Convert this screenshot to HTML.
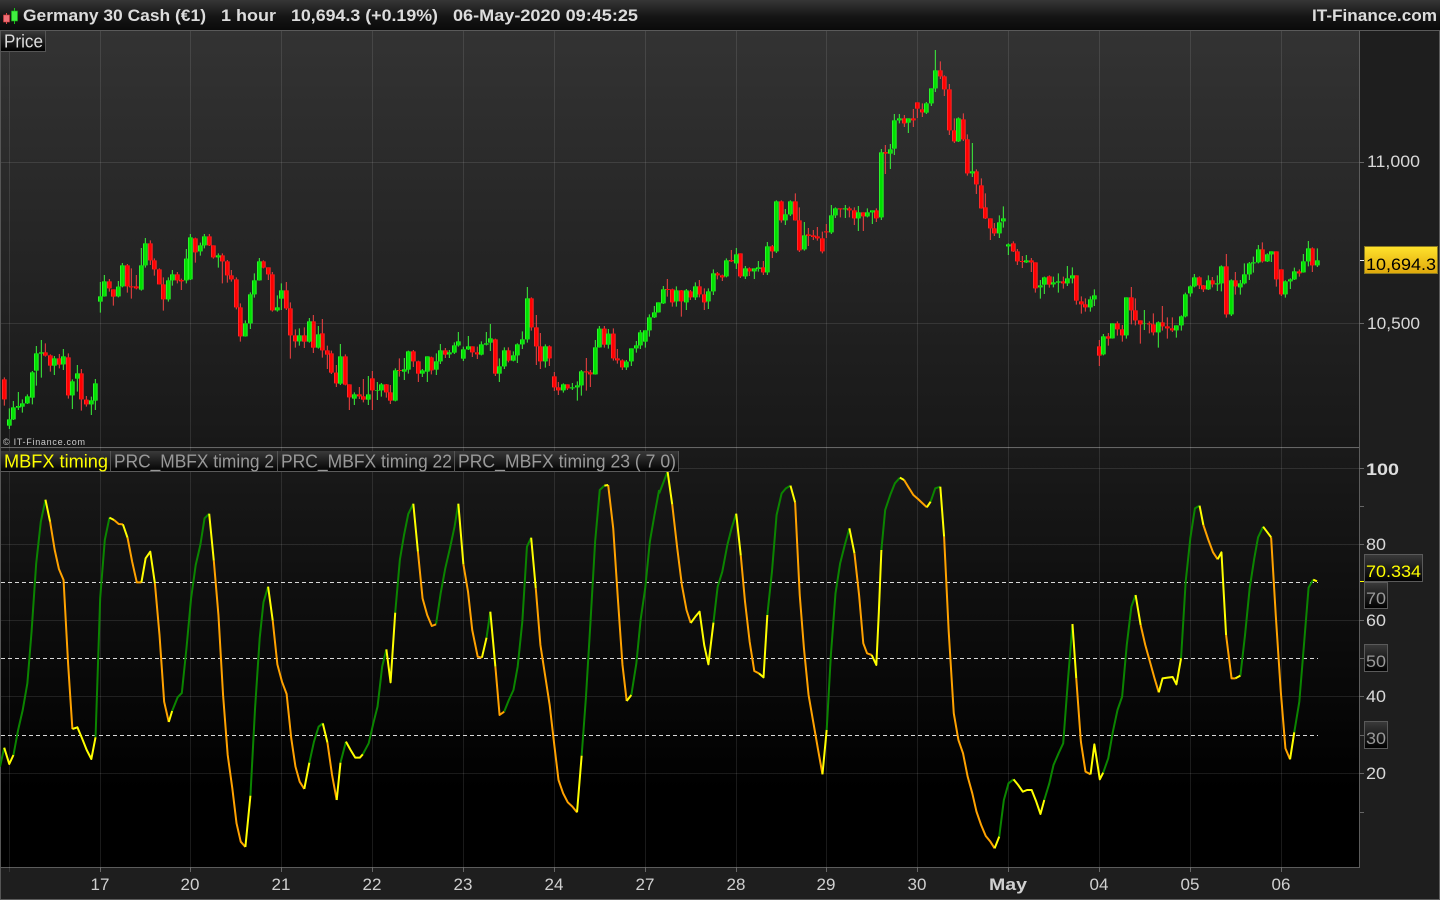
<!DOCTYPE html>
<html><head><meta charset="utf-8"><title>Germany 30 Cash</title>
<style>
html,body{margin:0;padding:0;background:#1e1e1e;overflow:hidden}
svg{display:block;position:absolute;left:0;top:0}
text{font-family:"Liberation Sans",sans-serif;fill:#ddd;font-size:17px}
.h{font-weight:bold;fill:#dcdcdc}
.a{fill:#d8d8d8}
.m{text-anchor:middle;fill:#d0d0d0}
.t{fill:#999;font-size:18px}
.wg{fill:none;stroke:#3cf53c;stroke-width:3}
.wr{fill:none;stroke:#f54242;stroke-width:3}
.bg{fill:none;stroke:#2cf52c;stroke-width:14}
.bgi{fill:none;stroke:#00e000;stroke-width:8}
.br{fill:none;stroke:#ff2a2a;stroke-width:14}
.bri{fill:none;stroke:#ff0000;stroke-width:8}
.g,.o,.y{fill:none;stroke-width:2;vector-effect:non-scaling-stroke;stroke-linejoin:round}
.g{stroke:#0b8500}.o{stroke:#ffa200}.y{stroke:#ffff00}
</style></head><body>
<svg width="1440" height="900" viewBox="0 0 1440 900" xmlns="http://www.w3.org/2000/svg">
<defs>
<linearGradient id="hd" x1="0" y1="0" x2="0" y2="1"><stop offset="0" stop-color="#363636"/><stop offset=".55" stop-color="#151515"/><stop offset="1" stop-color="#0a0a0a"/></linearGradient>
<linearGradient id="pp" x1="0" y1="0" x2="0" y2="1"><stop offset="0" stop-color="#333"/><stop offset="1" stop-color="#181818"/></linearGradient>
<linearGradient id="ip" x1="0" y1="0" x2="0" y2="1"><stop offset="0" stop-color="#1a1a1a"/><stop offset=".82" stop-color="#000"/><stop offset="1" stop-color="#000"/></linearGradient>
<linearGradient id="tb" x1="0" y1="0" x2="0" y2="1"><stop offset="0" stop-color="#3a3a3a"/><stop offset="1" stop-color="#000"/></linearGradient>
<linearGradient id="yb" x1="0" y1="0" x2="0" y2="1"><stop offset="0" stop-color="#ffe22c"/><stop offset="1" stop-color="#dfa80c"/></linearGradient>

<path id="z6g" d="M28 658V677M40 622V658M55 618V623M67 610V620M82 589V610M97 517V593M109 460V512M124 457V461M163 475V497M190 469V493M217 544V586M232 520V536M274 601V613M286 550V602M301 289V305M313 244V289M355 260V289M367 196V259M424 196V269M436 130V196M505 241V298M517 223V241M559 176V241M571 112V238M601 136V154M613 109V136M655 166V172M736 370V409M751 283V370M763 241V283M778 184V241M832 322V331M844 271V296M898 406V424"/>
<path id="z6r" d="M13 538V598M136 457V467M151 466V497M178 475V494M205 472V586M244 520V598M259 599V613M328 244V265M340 268V290M382 196V259M394 259V262M409 259V265M451 130V181M463 181V208M478 208V253M490 253V298M532 223V241M544 240V244M586 115V157M628 109V136M640 136V172M667 166V184M682 184V226M694 226V238M709 238V322M721 322V409M790 184V203M805 202V223M817 223V331M859 271V325M871 325V406M886 406V424"/>

<path id="z7g" d="M28 274V335M55 313V353M121 379V461M163 493V506M205 493V509M232 480V482M244 463V481M286 421V512M313 418V425M325 364V419M367 421V431M382 379V425M409 394V419M421 361V394M448 367V373M463 346V368M475 334V346M490 358V386M505 349V358M544 343V374M559 340V344M571 325V338M598 409V431M613 361V409M640 376V392M652 343V376M667 328V343M682 205V328M736 349V394M790 463V481M817 472V475M832 466V472M844 424V466M886 352V433"/>
<path id="z7r" d="M13 316V335M40 274V353M67 310V361M82 361V374M94 370V428M109 428V460M136 379V464M148 463V502M178 493V499M190 499V509M217 445V481M259 463V487M271 487V512M298 420V423M340 364V394M355 394V431M394 382V421M436 361V374M517 349V367M532 367V373M586 328V431M625 361V392M694 205V292M709 292V349M721 349V394M748 349V385M763 439V472M775 472V481M802 463V475M859 424V427M871 427V433"/>

<path id="z8g" d="M-2 416V472M25 431V464M79 515V532M94 475V514M109 466V475M121 427V466M136 421V455M148 382V421M163 367V382M175 337V367M190 298V340M229 301V334M259 301V337M286 289V322M325 304V334M340 250V304M379 211V259M409 193V220M436 235V259M463 235V244M475 232V237M502 169V247M529 34V184M556 73V91M571 34V73M613 136V178M694 76V127M706 55V76M736 55V58M775 67V85M802 67V79M817 61V67"/>
<path id="z8r" d="M13 416V464M40 431V505M52 505V511M67 511V532M202 297V300M217 298V337M244 301V334M271 304V322M298 289V313M313 313V337M352 250V256M367 256V262M394 210V214M421 190V259M448 235V244M490 232V247M517 169V184M544 34V91M586 34V91M598 91V181M625 133V138M640 136V141M652 139V145M667 145V184M679 124V127M721 55V58M748 55V61M763 61V85M790 67V79M829 61V85"/>

<path id="z5g" d="M64 337V532M91 328V341M103 241V326M118 235V241M145 235V248M199 190V218M214 145V190M226 91V145M295 235V304M337 394V400M418 547V580M430 535V544"/>
<path id="z5r" d="M76 336V341M133 235V250M160 235V241M172 187V206M187 208V217M241 91V109M253 109V148M268 148V271M283 271V304M310 238V298M322 298V400M349 394V433M364 436V505M376 502V535M391 535V565M403 565V580"/>

<path id="z9g" d="M25 43V49M79 91V97M121 166V172M133 142V164M160 157V163M175 154V158M202 145V160M217 136V145M271 208V232M283 196V208M310 319V373M337 280V325M379 202V316M433 280V281M475 277V307M529 286V301M544 259V286M556 193V259M571 169V190M583 142V169M625 151V178M652 160V163M664 109V160M694 151V253M721 160V172M733 133V160M748 100V133M760 97V100M775 58V97M802 73V94M814 64V73M856 154V193M871 148V154M883 124V148M910 94V127M925 55V94M952 91V106"/>
<path id="z9r" d="M40 40V64M52 64V94M67 93V96M94 91V97M106 97V175M148 139V164M190 154V160M229 136V212M244 214V223M256 223V232M298 349V377M325 319V326M352 280V298M367 298V316M394 202V241M406 241V271M421 271V283M448 280V283M460 283V307M487 277V289M502 289V295M517 295V301M598 142V166M610 166V178M637 151V163M679 109V253M706 151V169M787 58V94M829 64V148M844 118V193M898 124V130M937 55V106"/>
</defs>

<!-- backgrounds -->
<rect width="1440" height="900" fill="#1e1e1e"/>
<rect x="0" y="0" width="1440" height="30" fill="url(#hd)"/>
<rect x="0" y="30" width="1440" height="1" fill="#5a5a5a"/>
<rect x="1" y="31" width="1359" height="416" fill="url(#pp)"/>
<rect x="0" y="447" width="1360" height="1" fill="#666"/>
<rect x="1" y="449" width="1359" height="418" fill="url(#ip)"/>
<rect x="0" y="31" width="1" height="869" fill="#555"/>
<rect x="1359" y="31" width="1" height="837" fill="#5c5c5c"/>
<rect x="0" y="867" width="1360" height="1" fill="#5c5c5c"/>
<rect x="0" y="899" width="1440" height="1" fill="#5c5c5c"/>
<rect x="1439" y="31" width="1" height="869" fill="#5c5c5c"/>

<!-- vertical grid -->
<g fill="#fff" fill-opacity=".1">
<rect x="9" y="31" width="1" height="841"/><rect x="100" y="31" width="1" height="841"/><rect x="190" y="31" width="1" height="841"/><rect x="281" y="31" width="1" height="841"/><rect x="372" y="31" width="1" height="841"/><rect x="463" y="31" width="1" height="841"/><rect x="554" y="31" width="1" height="841"/><rect x="645" y="31" width="1" height="841"/><rect x="736" y="31" width="1" height="841"/><rect x="826" y="31" width="1" height="841"/><rect x="917" y="31" width="1" height="841"/><rect x="1008" y="31" width="1" height="841"/><rect x="1099" y="31" width="1" height="841"/><rect x="1190" y="31" width="1" height="841"/><rect x="1281" y="31" width="1" height="841"/>
<!-- horizontal grid -->
<rect x="1" y="162" width="1363" height="1"/><rect x="1" y="323" width="1363" height="1"/>
<rect x="1" y="468" width="1363" height="1"/><rect x="1" y="544" width="1363" height="1"/><rect x="1" y="620" width="1363" height="1"/><rect x="1" y="696" width="1363" height="1"/><rect x="1" y="773" width="1363" height="1"/>
</g>
<g fill="#666">
<rect x="1360" y="506" width="4" height="1"/><rect x="1360" y="812" width="4" height="1"/>
<rect x="1360" y="162" width="4" height="1"/><rect x="1360" y="323" width="4" height="1"/>
<rect x="1360" y="468" width="4" height="1"/><rect x="1360" y="544" width="4" height="1"/><rect x="1360" y="620" width="4" height="1"/><rect x="1360" y="696" width="4" height="1"/><rect x="1360" y="773" width="4" height="1"/>
<rect x="1360" y="658" width="4" height="1"/><rect x="1360" y="735" width="4" height="1"/>
<rect x="100" y="868" width="1" height="4"/><rect x="190" y="868" width="1" height="4"/><rect x="281" y="868" width="1" height="4"/><rect x="372" y="868" width="1" height="4"/><rect x="463" y="868" width="1" height="4"/><rect x="554" y="868" width="1" height="4"/><rect x="645" y="868" width="1" height="4"/><rect x="736" y="868" width="1" height="4"/><rect x="826" y="868" width="1" height="4"/><rect x="917" y="868" width="1" height="4"/><rect x="1008" y="868" width="1" height="4"/><rect x="1099" y="868" width="1" height="4"/><rect x="1190" y="868" width="1" height="4"/><rect x="1281" y="868" width="1" height="4"/>
</g>

<!-- candles -->
<g transform="translate(0 200) scale(.33333)">
<path class="wg" d="M28 625V687M40 603V660M55 576V630M67 598V638M82 583V612M97 513V613M109 438V557M124 420V533M163 468V525M190 447V510M217 538V627M232 495V575M274 590V645M286 537V630M301 246V338M313 225V290M355 243V292M367 189V262M424 144V272M436 114V203M505 232V305M517 210V257M559 147V250M571 102V240M601 128V167M613 102V145M655 160V203M736 361V410M751 277V387M763 220V293M778 174V242M832 286V335M844 250V330M898 385V437"/>
<path class="wr" d="M13 532V617M136 430V470M151 463V515M178 462V505M205 460V596M244 507V632M259 588V620M328 237V275M340 268V317M382 192V278M394 205V296M409 225V268M451 121V195M463 175V227M478 205V253M490 232V332M532 216V250M544 236V270M586 113V188M628 102V138M640 136V176M667 160V250M682 180V248M694 210V245M709 232V328M721 310V425M790 181V205M805 202V240M817 216V335M859 246V330M871 307V476M886 388V443"/>
<use href="#z6r" class="br"/><use href="#z6r" class="bri"/><use href="#z6g" class="bg"/><use href="#z6g" class="bgi"/>
</g>
<g transform="translate(300 230) scale(.33333)">
<path class="wg" d="M28 264V338M55 288V356M121 342V465M163 487V525M205 438V525M232 456V510M244 459V500M286 415V514M313 384V450M325 362V431M367 417V441M382 379V456M409 370V435M421 342V402M448 360V384M463 337V372M475 306V350M490 350V393M505 318V360M544 334V376M559 306V346M571 282V363M598 385V456M613 352V417M640 364V394M652 340V399M667 304V357M682 171V338M736 343V413M790 460V488M817 459V480M832 454V512M844 420V497M886 330V434"/>
<path class="wr" d="M13 292V354M40 255V369M67 267V383M82 347V417M94 362V432M109 405V471M136 373V466M148 463V540M178 471V507M190 447V517M217 423V540M259 462V503M271 465V522M298 385V440M340 360V411M355 392V456M394 380V433M436 354V384M517 349V381M532 350V387M586 326V438M625 352V397M694 202V302M709 255V405M721 309V417M748 346V408M763 426V483M775 456V495M802 463V480M859 384V482M871 420V471"/>
<use href="#z7r" class="br"/><use href="#z7r" class="bri"/><use href="#z7g" class="bg"/><use href="#z7g" class="bgi"/>
</g>
<g transform="translate(600 190) scale(.33333)">
<path class="wg" d="M-2 408V473M25 417V476M79 510V540M94 475V528M109 453V488M121 420V477M136 421V473M148 373V440M163 348V384M175 337V368M190 288V342M229 289V350M259 297V360M286 277V330M325 295V357M340 238V315M379 205V262M409 174V237M436 228V267M463 235V267M475 213V245M502 156V255M529 31V189M556 57V105M571 31V78M613 96V182M694 45V132M706 52V84M736 45V84M775 48V123M802 55V82M817 61V102"/>
<path class="wr" d="M13 408V473M40 415V512M52 477V521M67 508V540M202 267V320M217 296V350M244 300V380M271 300V330M298 270V322M313 295V360M352 246V268M367 254V273M394 180V216M421 190V264M448 232V258M490 213V255M517 165V204M544 31V98M586 10V92M598 52V186M625 114V168M640 120V150M652 111V152M667 125V190M679 102V144M721 55V82M748 50V82M763 52V105M790 67V123M829 55V96"/>
<use href="#z8r" class="br"/><use href="#z8r" class="bri"/><use href="#z8g" class="bg"/><use href="#z8g" class="bgi"/>
</g>
<g transform="translate(860 40) scale(.33333)">
<path class="wg" d="M64 327V540M91 312V387M103 222V345M118 222V250M145 235V279M199 186V222M214 145V198M226 30V156M295 232V306M337 309V411M418 526V594M430 499V563"/>
<path class="wr" d="M76 315V402M133 225V261M160 207V261M172 187V234M187 190V231M241 64V117M253 106V168M268 132V285M283 235V309M310 220V303M322 283V407M349 388V462M364 415V506M376 460V537M391 535V600M403 549V588"/>
<use href="#z5r" class="br"/><use href="#z5r" class="bri"/><use href="#z5g" class="bg"/><use href="#z5g" class="bgi"/>
</g>
<g transform="translate(1000 230) scale(.33333)">
<path class="wg" d="M25 40V75M79 75V99M121 150V206M133 140V192M160 140V172M175 130V188M202 108V168M217 112V160M271 199V245M283 178V228M310 312V376M337 280V326M379 202V326M433 240V300M475 274V353M529 286V323M544 256V302M556 188V262M571 166V200M583 132V172M625 136V180M652 136V183M664 106V184M694 148V258M721 150V194M733 100V163M748 96V150M760 80V128M775 45V100M802 70V96M814 64V96M856 151V203M871 145V177M883 113V150M910 72V128M925 33V109M952 55V111"/>
<path class="wr" d="M40 34V66M52 57V105M67 78V114M94 84V126M106 97V188M148 136V173M190 140V176M229 136V224M244 199V251M256 205V245M298 330V408M325 309V347M352 274V317M367 285V335M394 171V283M406 205V286M421 271V341M448 274V310M460 250V316M487 228V302M502 262V326M517 262V306M598 139V177M610 165V186M637 141V172M679 72V263M706 126V194M787 37V98M829 64V170M844 118V198M898 118V140M937 52V126"/>
<use href="#z9r" class="br"/><use href="#z9r" class="bri"/><use href="#z9g" class="bg"/><use href="#z9g" class="bgi"/>
</g>

<text x="3" y="445" style="font-size:9px;fill:#ccc" textLength="82" lengthAdjust="spacing">© IT-Finance.com</text>

<!-- price tag -->
<rect x="1" y="31" width="44" height="20" fill="url(#tb)"/>
<path d="M45.500 31V51.500H1" fill="none" stroke="#555"/>
<text x="4" y="47.500" style="font-size:18px;fill:#ddd" textLength="39" lengthAdjust="spacingAndGlyphs">Price</text>

<!-- dashed levels -->
<g stroke="#d8d8d8" stroke-width="1" stroke-dasharray="4 3" fill="none">
<path d="M1 582.500H1318M1 658.500H1318M1 735.500H1318"/>
</g>

<!-- indicator line -->
<g transform="translate(0 465) scale(.42088 .33333)">
<path class="g" d="M0 905L10 848M32 870L43 795 54 735 65 655 75 500 86 295 97 170 108 104M227 817L238 400 249 225 260 158M409 738L422 697 432 684 443 550 454 400 465 300 476 240 486 160 497 146M595 992L606 730 617 520 626 412 637 365M735 893L746 830 757 785 767 775M809 893L822 830M862 868L876 835 887 775 897 725 908 605 918 553M939 443L950 285 960 210 970 147 982 116M1036 478L1047 385 1058 310 1069 250 1080 185 1089 116M1156 518L1165 440M1198 740L1209 705 1220 675 1230 605 1241 470 1252 245 1262 218M1382 872L1392 700 1403 470 1414 230 1425 75 1436 62M1500 690L1512 595 1522 465 1533 370 1544 230 1555 150 1566 75"/>
<path class="o" d="M119 170L130 255 140 312 151 345 162 600 172 792M271 165L282 177 292 178M303 218L314 290 325 352 336 352M368 355L379 510 390 710 401 771M508 287L519 450 530 690 541 870 552 970 562 1075 572 1130 583 1146M648 467L659 598 670 650 681 687 692 820 702 905 712 950 723 972M778 833L789 930 800 1005M993 260L1004 400 1015 450 1026 483 1036 478M1101 298L1112 380 1122 495 1135 575 1145 578M1177 605L1187 750 1198 740M1273 370L1284 540 1295 630 1306 720 1317 840 1327 945 1338 985 1349 1012 1360 1025 1371 1042M1445 60L1457 190 1468 400 1479 600 1489 708"/>
<path class="y" d="M10 848L22 897 32 870M108 104L119 170M172 792L184 787 195 820 206 855 217 882 227 817M260 158L271 165M292 178L303 218M336 352L346 280 357 260 368 355M401 771L409 738M497 146L508 287M583 1146L595 992M637 365L648 467M723 972L735 893M767 775L778 833M800 1005L809 893M822 830L833 855 844 878 855 878 862 868M918 553L928 652 939 443M982 116L993 260M1089 116L1101 298M1145 578L1156 518M1165 440L1177 605M1262 218L1273 370M1371 1042L1382 872M1436 62L1445 60M1489 708L1500 690"/>
</g>
<g transform="translate(660 465) scale(.42088 .33333)">
<path class="g" d="M-2 85L18 20M127 473L137 365 148 320 160 240 170 190 181 146M255 450L266 320 277 150 289 85 299 70 310 62M396 795L406 570 417 385 428 295 439 240 450 190M526 255L535 135 547 90 558 55 570 38M643 110L654 70 666 65M806 1115L817 1005 828 955 840 943M913 1005L925 955 935 900 947 865 958 835 969 650 980 477M1053 923L1065 880 1076 800 1087 735 1098 695 1109 540 1120 425 1130 390M1238 580L1249 350 1260 220 1271 130 1282 122M1379 632L1390 510 1401 370 1412 280 1421 217 1433 185M1507 802L1519 710 1530 540 1541 368 1552 344"/>
<path class="o" d="M29 118L41 250 52 360 63 435 73 474M192 272L202 410 213 530 224 618 235 625M321 112L332 390 342 550 353 690 364 770 375 850 386 928M462 265L473 390 483 535 492 565 503 570M580 45L591 68 602 90 613 102 624 115 634 127M675 215L686 500 698 745 709 825 720 865 731 935 742 985 752 1040 763 1080 774 1113 785 1130 795 1150M989 640L1000 830 1011 920 1023 928M1142 480L1153 540 1164 590 1175 640 1185 682M1291 180L1303 225 1314 262 1325 283M1345 510L1358 640 1367 640M1452 217L1463 450 1475 680 1486 850 1497 883"/>
<path class="y" d="M18 20L29 118M73 474L84 455 94 440 105 540 115 598 127 473M181 146L192 272M235 625L246 637 255 450M310 62L321 112M386 928L396 795M450 190L462 265M503 570L514 600 520 440 526 255M570 38L580 45M634 127L643 110M666 65L675 215M795 1150L806 1115M840 943L851 960 862 980 872 975 883 975 894 1010 904 1047 913 1005M980 477L989 640M1023 928L1032 838 1045 943 1053 923M1130 390L1142 480M1185 682L1194 640 1206 638 1218 636 1227 658 1238 580M1282 122L1291 180M1325 283L1334 262 1345 510M1367 640L1379 632M1433 185L1452 217M1497 883L1507 802M1552 344L1561 349"/>
</g>

<!-- legend tabs -->
<rect x="1" y="451" width="677" height="21" fill="url(#tb)"/>
<rect x="1" y="471" width="678" height="1" fill="#5a5a5a"/>
<rect x="110" y="451" width="1" height="21" fill="#555"/><rect x="277" y="451" width="1" height="21" fill="#555"/><rect x="454" y="451" width="1" height="21" fill="#555"/><rect x="678" y="451" width="1" height="21" fill="#555"/>
<text x="4" y="467.500" style="font-size:18px;fill:#ffff00" textLength="104" lengthAdjust="spacingAndGlyphs">MBFX timing</text>
<text x="114" y="467.500" class="t" textLength="160" lengthAdjust="spacingAndGlyphs">PRC_MBFX timing 2</text>
<text x="281" y="467.500" class="t" textLength="171" lengthAdjust="spacingAndGlyphs">PRC_MBFX timing 22</text>
<text x="458" y="467.500" class="t" textLength="218" lengthAdjust="spacingAndGlyphs">PRC_MBFX timing 23 ( 7 0)</text>

<!-- header -->
<path d="M6.500 13V24" stroke="#e04848" fill="none"/><rect x="3.500" y="15" width="6" height="7" fill="#f07078" stroke="#d03a3a" stroke-width=".6"/>
<path d="M14.500 8V24" stroke="#18c018" fill="none"/><rect x="11.500" y="11" width="6" height="10" fill="#40f040" stroke="#18b018" stroke-width=".6"/>
<text x="23" y="21" class="h" textLength="183" lengthAdjust="spacingAndGlyphs">Germany 30 Cash (€1)</text>
<text x="221" y="21" class="h" textLength="55" lengthAdjust="spacingAndGlyphs">1 hour</text>
<text x="291" y="21" class="h" textLength="147" lengthAdjust="spacingAndGlyphs">10,694.3 (+0.19%)</text>
<text x="453" y="21" class="h" textLength="185" lengthAdjust="spacingAndGlyphs">06-May-2020 09:45:25</text>
<text x="1312" y="21" class="h" textLength="125" lengthAdjust="spacingAndGlyphs">IT-Finance.com</text>

<!-- right axis -->
<text x="1367" y="167" class="a" textLength="53" lengthAdjust="spacingAndGlyphs">11,000</text>
<text x="1367" y="329" class="a" textLength="53" lengthAdjust="spacingAndGlyphs">10,500</text>
<rect x="1360" y="260" width="4" height="1" fill="#eee"/>
<rect x="1364.500" y="246.500" width="73" height="27" fill="url(#yb)" stroke="#8a7a20"/>
<text x="1366" y="270" style="fill:#000" textLength="70" lengthAdjust="spacingAndGlyphs">10,694.3</text>

<text x="1366" y="475" style="font-weight:bold;fill:#ddd" textLength="33" lengthAdjust="spacingAndGlyphs">100</text>
<text x="1366" y="550" class="a" textLength="20" lengthAdjust="spacingAndGlyphs">80</text>
<text x="1366" y="626" class="a" textLength="20" lengthAdjust="spacingAndGlyphs">60</text>
<text x="1366" y="702" class="a" textLength="20" lengthAdjust="spacingAndGlyphs">40</text>
<text x="1366" y="779" class="a" textLength="20" lengthAdjust="spacingAndGlyphs">20</text>

<rect x="1360" y="581" width="4" height="1" fill="#ffff00"/>
<rect x="1364.500" y="582.500" width="23" height="26" fill="url(#tb)" stroke="#5a5a5a"/>
<text x="1366" y="604" style="fill:#999" textLength="20" lengthAdjust="spacingAndGlyphs">70</text>
<rect x="1364.500" y="644.500" width="23" height="27" fill="url(#tb)" stroke="#5a5a5a"/>
<text x="1366" y="667" style="fill:#999" textLength="20" lengthAdjust="spacingAndGlyphs">50</text>
<rect x="1364.500" y="721.500" width="23" height="27" fill="url(#tb)" stroke="#5a5a5a"/>
<text x="1366" y="744" style="fill:#999" textLength="20" lengthAdjust="spacingAndGlyphs">30</text>
<rect x="1364.500" y="554.500" width="58" height="27" fill="url(#tb)" stroke="#5a5a5a"/>
<text x="1366" y="577" style="fill:#ffff00" textLength="55" lengthAdjust="spacingAndGlyphs">70.334</text>

<!-- bottom axis -->
<text x="100" y="890" class="m">17</text>
<text x="190" y="890" class="m">20</text>
<text x="281" y="890" class="m">21</text>
<text x="372" y="890" class="m">22</text>
<text x="463" y="890" class="m">23</text>
<text x="554" y="890" class="m">24</text>
<text x="645" y="890" class="m">27</text>
<text x="736" y="890" class="m">28</text>
<text x="826" y="890" class="m">29</text>
<text x="917" y="890" class="m">30</text>
<text x="989" y="890" style="font-weight:bold;fill:#d0d0d0" textLength="38" lengthAdjust="spacingAndGlyphs">May</text>
<text x="1099" y="890" class="m">04</text>
<text x="1190" y="890" class="m">05</text>
<text x="1281" y="890" class="m">06</text>
</svg>
</body></html>
